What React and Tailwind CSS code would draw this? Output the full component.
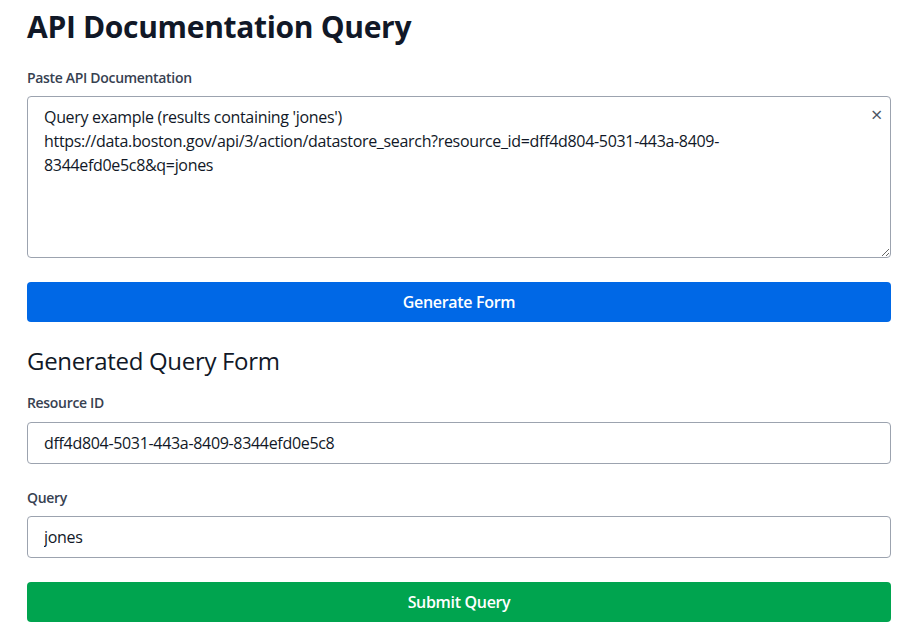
import { useState } from 'react'

const sample =
  "Query example (results containing 'jones')\nhttps://data.boston.gov/api/3/action/datastore_search?resource_id=dff4d804-5031-443a-8409-8344efd0e5c8&q=jones"

export default function App() {
  const [doc, setDoc] = useState(sample)
  const [resourceId, setResourceId] = useState('dff4d804-5031-443a-8409-8344efd0e5c8')
  const [query, setQuery] = useState('jones')

  return (
    <div className="min-h-screen bg-white font-['Open_Sans',sans-serif] tracking-[-0.02em] text-gray-900">
      <div className="pl-[27px] pr-[23px] pt-[9px] pb-6">
        <h1 className="text-3xl font-bold text-[#111827] mb-[23px]">API Documentation Query</h1>

        <label className="block text-sm font-semibold text-[#374151] mb-2">Paste API Documentation</label>
        <div className="relative">
          <textarea
            rows={6}
            value={doc}
            onChange={(e) => setDoc(e.target.value)}
            spellCheck={false}
            className="block w-full h-[162px] border border-[#9ca3af] rounded px-4 py-2 text-base leading-6 text-[#111827] outline-none"
          />
          <button
            onClick={() => setDoc('')}
            className="absolute top-[9px] right-[9px] text-[#4b5563] text-xl leading-none"
          >
            ×
          </button>
        </div>

        <button className="mt-6 w-full h-10 rounded bg-[#0068e6] text-white font-semibold text-base">
          Generate Form
        </button>

        <h2 className="mt-[23px] text-2xl font-medium text-[#111827] mb-4">Generated Query Form</h2>

        <label className="block text-sm font-semibold text-[#374151] mb-[9px]">Resource ID</label>
        <input
          value={resourceId}
          onChange={(e) => setResourceId(e.target.value)}
          className="block w-full border border-[#9ca3af] rounded px-4 py-2 text-base leading-6 text-[#111827] outline-none"
        />

        <label className="block mt-6 text-sm font-semibold text-[#374151] mb-2">Query</label>
        <input
          value={query}
          onChange={(e) => setQuery(e.target.value)}
          className="block w-full border border-[#9ca3af] rounded px-4 py-2 text-base leading-6 text-[#111827] outline-none"
        />

        <button className="mt-6 w-full h-10 rounded bg-[#00a44f] text-white font-semibold text-base">
          Submit Query
        </button>
      </div>
    </div>
  )
}
